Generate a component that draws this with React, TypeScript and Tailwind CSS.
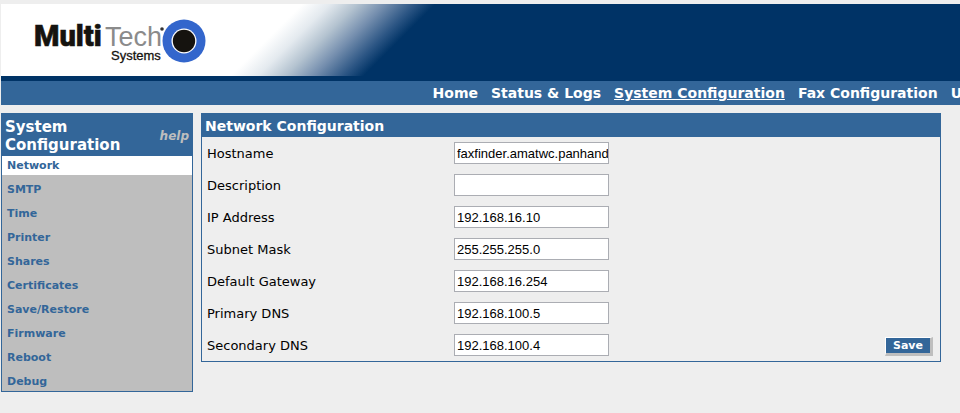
import clsx from "clsx";

type Field = {
  id: string;
  label: string;
  value: string;
};

const navItems = ["Home", "Status & Logs", "System Configuration", "Fax Configuration", "Users"];

const menuItems = [
  "Network",
  "SMTP",
  "Time",
  "Printer",
  "Shares",
  "Certificates",
  "Save/Restore",
  "Firmware",
  "Reboot",
  "Debug"
];

const fields: Field[] = [
  { id: "hostname", label: "Hostname", value: "faxfinder.amatwc.panhand" },
  { id: "description", label: "Description", value: "" },
  { id: "ip", label: "IP Address", value: "192.168.16.10" },
  { id: "mask", label: "Subnet Mask", value: "255.255.255.0" },
  { id: "gateway", label: "Default Gateway", value: "192.168.16.254" },
  { id: "dns1", label: "Primary DNS", value: "192.168.100.5" },
  { id: "dns2", label: "Secondary DNS", value: "192.168.100.4" }
];

function Logo() {
  return (
    <svg width="180" height="60" viewBox="0 0 180 60" role="img" aria-label="MultiTech Systems">
      <text
        x="3"
        y="32"
        fontFamily="Roboto, sans-serif"
        fontWeight="900"
        fontSize="29"
        fill="#15130f"
        stroke="#15130f"
        strokeWidth="0.6"
      >
        Multi
      </text>
      <text x="74" y="32" fontFamily="'Liberation Sans', sans-serif" fontSize="27" fill="#8b8b8b">
        Tech
      </text>
      <text
        x="80"
        y="46"
        fontFamily="'Liberation Sans', sans-serif"
        fontSize="13"
        fill="#15130f"
        stroke="#15130f"
        strokeWidth="0.3"
      >
        Systems
      </text>
      <circle cx="131" cy="15" r="1.8" fill="#333" />
      <circle cx="153" cy="27" r="21.5" fill="#3366cc" />
      <circle cx="153" cy="27" r="12.5" fill="#fff" />
      <circle cx="153" cy="27" r="11.2" fill="#15130f" />
    </svg>
  );
}

function Header() {
  return (
    <header className="bg-[#003366]">
      <div className="flex h-18">
        <div className="w-[220px] shrink-0 bg-white pt-[10px] pl-[30px]">
          <Logo />
        </div>
        <div className="w-[230px] shrink-0 bg-[linear-gradient(135deg,#fff_27%,#e4eaef_36%,#b4c3d0_45%,#7891b0_54%,#2f5886_64%,#003366_71%)]" />
      </div>
      <nav className="mt-[5px] flex h-6 items-center gap-[13px] overflow-hidden bg-[#336699] pl-[45%] text-[14px] leading-[18px] font-bold whitespace-nowrap text-white">
        {navItems.map((item) => (
          <a key={item} href="#" className={clsx(item === "System Configuration" && "underline")}>
            {item}
          </a>
        ))}
      </nav>
    </header>
  );
}

function Sidebar() {
  return (
    <aside className="w-48 shrink-0 border border-[#336699] bg-[#bebebe]">
      <div className="flex items-center justify-between bg-[#336699] pt-1 pr-[3px] pb-[2px] pl-[3px]">
        <h2 className="w-32 text-[15px] leading-[18px] font-bold text-white">System Configuration</h2>
        <a href="#" className="text-[12px] leading-[18px] font-bold text-[#bebebe] italic">
          help
        </a>
      </div>
      <ul className="flex flex-col gap-[5px] text-[11px] leading-[19px] font-bold text-[#336699]">
        {menuItems.map((item) => (
          <li key={item} className={clsx("pl-[5px]", item === "Network" && "bg-white")}>
            <a href="#">{item}</a>
          </li>
        ))}
      </ul>
    </aside>
  );
}

function NetworkForm() {
  return (
    <form className="mr-[19px] min-w-0 flex-1 border border-[#336699]">
      <h1 className="bg-[#336699] pt-[3px] pb-[2px] pl-[3px] text-[14px] leading-[18px] font-bold text-white">
        Network Configuration
      </h1>
      <div className="flex items-end justify-between pr-[7px] pl-[5px]">
        <div>
          {fields.map((field) => (
            <div key={field.id} className="flex h-8 items-center">
              <label htmlFor={field.id} className="w-[247px] pt-[2px] text-[13px] leading-[18px] text-black">
                {field.label}
              </label>
              <input
                id={field.id}
                type="text"
                defaultValue={field.value}
                className="h-[22px] w-[155px] border border-[#abadb3] bg-white pl-[2px] font-['Liberation_Sans',sans-serif] text-[13px] text-black"
              />
            </div>
          ))}
        </div>
        <button
          type="button"
          className="mb-[5px] h-[19px] w-12 border-t border-r-3 border-b-3 border-l border-t-white border-r-[#bebebe] border-b-[#bebebe] border-l-white bg-[#336699] text-[11px] leading-[15px] font-bold text-white"
        >
          Save
        </button>
      </div>
    </form>
  );
}

export default function App() {
  return (
    <div className="min-h-screen overflow-hidden bg-[#eeeeee] pt-1 pl-px font-[Verdana,'DejaVu_Sans',sans-serif]">
      <Header />
      <main className="mt-2 flex items-start gap-2">
        <Sidebar />
        <NetworkForm />
      </main>
    </div>
  );
}
